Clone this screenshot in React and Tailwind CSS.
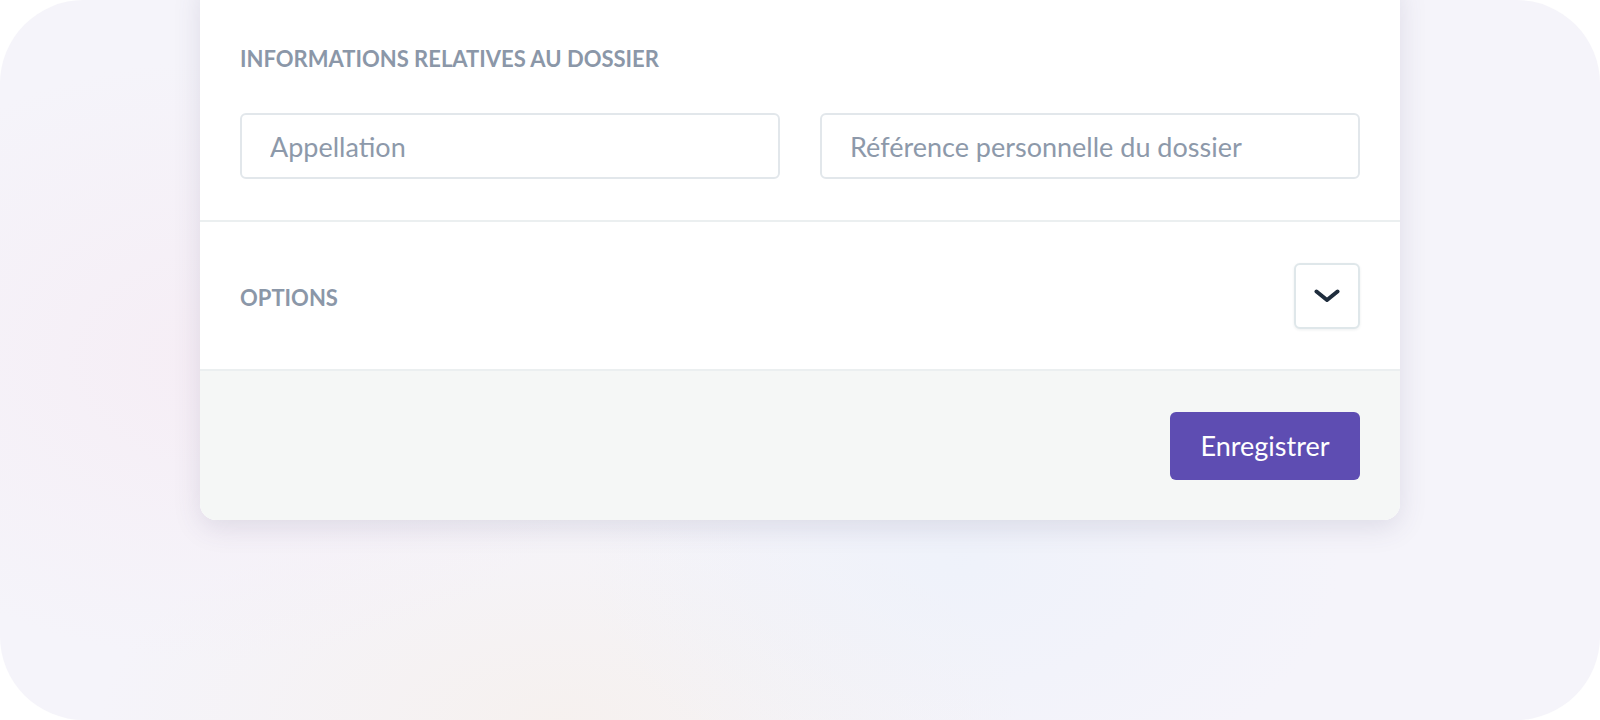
import { useState } from "react";

const font = { fontFamily: "Lato, 'Noto Sans', sans-serif" };

function Chevron() {
  return (
    <svg width="26" height="14" viewBox="0 0 26 14" fill="none" aria-hidden="true">
      <path
        d="M2.5 2.5 13 11l10.5-8.5"
        stroke="#1f2d3d"
        strokeWidth="4"
        strokeLinecap="round"
        strokeLinejoin="round"
      />
    </svg>
  );
}

export default function App() {
  const [open, setOpen] = useState(false);
  const [appellation, setAppellation] = useState("");
  const [reference, setReference] = useState("");

  return (
    <div className="w-[1600px] h-[720px] bg-white" style={font}>
      <div className="relative h-full overflow-hidden rounded-[84px] bg-[#f5f4fa] bg-[radial-gradient(ellipse_420px_300px_at_220px_360px,rgba(246,236,244,0.8),transparent),radial-gradient(ellipse_380px_240px_at_960px_560px,rgba(236,241,250,0.7),transparent),radial-gradient(ellipse_460px_220px_at_560px_720px,rgba(246,240,236,0.8),transparent)] flex justify-center">
        <div className="w-[1200px] self-start -mt-[24px] h-fit rounded-2xl bg-white shadow-[0_8px_28px_rgba(70,60,110,0.13)] overflow-hidden">
          <section className="px-10 pt-[67px] pb-[41px] border-b-2 border-[#ebeff0]">
            <h2 className="h-8 leading-8 text-[22px] font-bold uppercase text-[#8b97a8]">
              Informations relatives au dossier
            </h2>
            <div className="mt-[38px] grid grid-cols-2 gap-10">
              <input
                type="text"
                value={appellation}
                onChange={(e) => setAppellation(e.target.value)}
                placeholder="Appellation"
                className="h-[66px] w-full rounded-[6px] border-2 border-[#e2e7eb] bg-white px-[28px] text-[27px] text-[#2d3748] placeholder:text-[#8d99aa] outline-none"
              />
              <input
                type="text"
                value={reference}
                onChange={(e) => setReference(e.target.value)}
                placeholder="Référence personnelle du dossier"
                className="h-[66px] w-full rounded-[6px] border-2 border-[#e2e7eb] bg-white px-[28px] text-[27px] text-[#2d3748] placeholder:text-[#8d99aa] outline-none"
              />
            </div>
          </section>

          <section className="flex items-center justify-between px-10 pt-[41px] pb-[40px] border-b-2 border-[#ebeff0]">
            <h2 className="pt-[3px] text-[22px] font-bold uppercase text-[#8b97a8]">Options</h2>
            <button
              onClick={() => setOpen((o) => !o)}
              className="flex h-[66px] w-[66px] items-center justify-center rounded-[6px] border-2 border-[#dfe7ea] bg-white shadow-[0_1px_3px_rgba(30,50,70,0.08)]"
            >
              <Chevron />
            </button>
          </section>

          <div className="flex justify-end bg-[#f5f7f6] px-10 pt-[41px] pb-[40px]">
            <button className="h-[68px] w-[190px] rounded-[6px] bg-[#5e4db2] text-[27px] text-white">
              Enregistrer
            </button>
          </div>
        </div>
      </div>
    </div>
  );
}
